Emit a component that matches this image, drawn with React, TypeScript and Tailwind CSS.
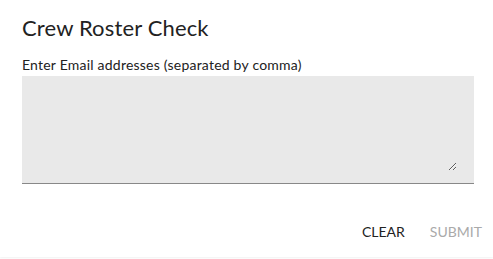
export default function App() {
  return (
    <div
      className="w-[493px] h-[259px] bg-white overflow-hidden"
      style={{ fontFamily: '"Lato", "Noto Sans", sans-serif' }}
    >
      <div className="h-[257px] bg-white shadow-[0_1px_2px_rgba(0,0,0,0.06)] flex flex-col">
        <h2 className="pl-[22px] pt-[14px] text-[22px] leading-[28px] tracking-[0.15px] text-[#222]">
          Crew Roster Check
        </h2>
        <div className="px-[22px] pt-[13px] flex flex-col">
          <label className="text-[14px] leading-[19px] tracking-[0.22px] text-[#222]">
            Enter Email addresses (separated by comma)
          </label>
          <div className="mt-[2px] w-[452px] h-[108px] bg-[#e9e9e9] border-b border-[#888] pt-[8px] pl-[12px]">
            <textarea className="block w-[423px] h-[87px] bg-transparent outline-none resize-y" />
          </div>
        </div>
        <div className="mt-auto mb-[15px] flex justify-end items-center gap-[25px] pr-[11px]">
          <button className="text-[14px] text-[#222]">CLEAR</button>
          <button className="text-[14px] text-[#aaa]" disabled>
            SUBMIT
          </button>
        </div>
      </div>
    </div>
  );
}
